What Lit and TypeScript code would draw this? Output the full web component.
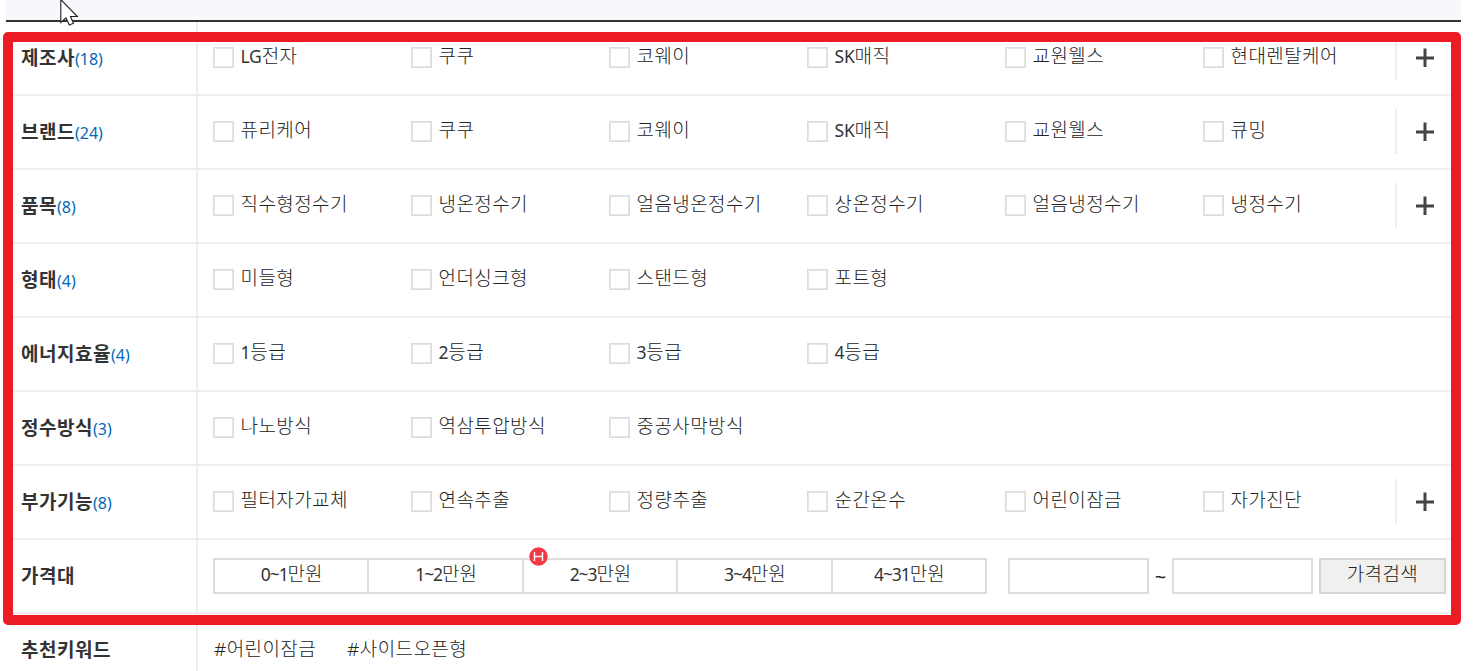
import { LitElement, html, css, nothing } from 'lit';
import { customElement, property } from 'lit/decorators.js';

interface FilterGroup {
    title: string;
    count: number;
    options: string[];
    more?: boolean;
}

const GROUPS: FilterGroup[] = [
    { title: '제조사', count: 18, options: ['LG전자', '쿠쿠', '코웨이', 'SK매직', '교원웰스', '현대렌탈케어'], more: true },
    { title: '브랜드', count: 24, options: ['퓨리케어', '쿠쿠', '코웨이', 'SK매직', '교원웰스', '큐밍'], more: true },
    { title: '품목', count: 8, options: ['직수형정수기', '냉온정수기', '얼음냉온정수기', '상온정수기', '얼음냉정수기', '냉정수기'], more: true },
    { title: '형태', count: 4, options: ['미들형', '언더싱크형', '스탠드형', '포트형'] },
    { title: '에너지효율', count: 4, options: ['1등급', '2등급', '3등급', '4등급'] },
    { title: '정수방식', count: 3, options: ['나노방식', '역삼투압방식', '중공사막방식'] },
    { title: '부가기능', count: 8, options: ['필터자가교체', '연속추출', '정량추출', '순간온수', '어린이잠금', '자가진단'], more: true },
];

const PRICES = ['0~1만원', '1~2만원', '2~3만원', '3~4만원', '4~31만원'];
const HOT_PRICE = 2;
const KEYWORDS = ['#어린이잠금', '#사이드오픈형'];

// Splits a label so that latin characters can use tighter spacing than hangul
const mixed = (text: string) =>
    text.split(/([\x21-\x7e]+)/).filter(Boolean).map(part =>
        /^[\x21-\x7e]/.test(part) ? html`<span class="latin">${part}</span>` : part);

@customElement('filter-row')
export class FilterRow extends LitElement {
    static override styles = css`
    :host {
      display: flex;
      box-sizing: border-box;
      height: 74px;
      border-bottom: 2px solid #eee;
    }
    .title {
      display: flex;
      align-items: center;
      box-sizing: border-box;
      width: 192px;
      flex: none;
      padding: 0 0 3px 15px;
      border-right: 2px solid #eee;
      color: #333;
      font-size: 19px;
      font-weight: 700;
      letter-spacing: 0.5px;
      white-space: nowrap;
    }
    .count {
      margin-top: 5px;
      color: #0068b7;
      font-size: 16px;
      font-weight: 400;
      letter-spacing: 0;
    }
    .content {
      flex: 1;
      display: flex;
      align-items: center;
      padding-left: 15px;
    }
  `;

    @property({ type: String })
    label: string = '';

    @property({ type: Number })
    count: number = 0;

    override render() {
        return html`
      <div class="title">
        <span>${this.label}</span>
        ${this.count ? html`<span class="count">(${this.count})</span>` : nothing}
      </div>
      <div class="content"><slot></slot></div>
    `;
    }
}

@customElement('app-root')
export class AppRoot extends LitElement {
    static override styles = css`
    :host {
      display: block;
      position: relative;
      box-sizing: border-box;
      height: 671px;
      overflow: hidden;
      padding: 0 17px 0 6px;
      background: #fff;
      color: #222;
      font-family: 'Noto Sans', 'Noto Sans CJK KR', sans-serif;
      font-size: 19px;
    }
    .topbar {
      height: 20px;
      background: #f6f8fc;
      border-bottom: 2px solid #333;
    }
    .options {
      display: grid;
      grid-template-columns: repeat(6, 198px);
      flex: none;
      width: 1182px;
      margin-bottom: 2px;
    }
    .option {
      display: flex;
      align-items: center;
      gap: 6.5px;
      height: 30px;
      font-weight: 300;
      line-height: 28px;
      letter-spacing: 0.4px;
      white-space: nowrap;
    }
    .option .text {
      margin-top: -3px;
    }
    .latin {
      color: #333;
      font-size: 17.5px;
      font-weight: 400;
      letter-spacing: -0.2px;
    }
    .box {
      box-sizing: border-box;
      width: 21px;
      height: 21px;
      border: 1px solid #dcdcdc;
      background: #fff;
      box-shadow: inset 0 0 0 1px #e6e6e6;
    }
    .more {
      display: flex;
      align-items: center;
      width: 56px;
      height: 45px;
      margin-bottom: 2px;
      padding-left: 19px;
      box-sizing: border-box;
      border-left: 2px solid #eee;
    }
    .prices {
      display: flex;
      box-sizing: border-box;
      width: 774px;
      height: 36px;
      border: 2px solid #ddd;
    }
    .price {
      position: relative;
      flex: 1;
      display: flex;
      align-items: center;
      justify-content: center;
      padding: 0 0 3px 1px;
      font-weight: 300;
      line-height: 27px;
    }
    .price + .price {
      border-left: 2px solid #ddd;
    }
    .price .latin {
      letter-spacing: -1.1px;
    }
    .hot {
      position: absolute;
      left: 5px;
      top: -13px;
    }
    .field {
      box-sizing: border-box;
      width: 141px;
      height: 36px;
      border: 2px solid #ddd;
      padding: 0 8px;
      border-radius: 0;
      font: inherit;
      outline: none;
    }
    .from {
      margin-left: 21px;
    }
    .tilde {
      width: 23px;
      font-size: 20px;
      text-align: center;
    }
    .search {
      box-sizing: border-box;
      width: 127px;
      height: 36px;
      margin-left: 6px;
      padding: 0 0 3px;
      border: 2px solid #d5d5d5;
      background: #f0f0ee;
      color: inherit;
      font: inherit;
      font-weight: 300;
      line-height: 27px;
      letter-spacing: 0.4px;
    }
    .keywords {
      display: flex;
      gap: 31px;
      padding: 0 0 4px 1px;
      font-weight: 300;
      letter-spacing: 0.4px;
    }
    .highlight {
      position: absolute;
      left: 3px;
      top: 32px;
      box-sizing: border-box;
      width: 1458px;
      height: 593px;
      border: 10px solid #ed1c24;
      border-radius: 5px;
      pointer-events: none;
    }
    .cursor {
      position: absolute;
      left: 60px;
      top: 0;
    }
  `;

    private _renderMore() {
        return html`
      <div class="more">
        <svg width="18" height="19" viewBox="0 0 18 19">
          <path d="M0 10H18M9 0.5V19" stroke="#444" stroke-width="3" />
        </svg>
      </div>
    `;
    }

    private _renderGroup(group: FilterGroup) {
        return html`
      <filter-row label=${group.title} count=${group.count}>
        <div class="options">
          ${group.options.map(option => html`
            <label class="option">
              <span class="box"></span>
              <span class="text">${mixed(option)}</span>
            </label>
          `)}
        </div>
        ${group.more ? this._renderMore() : nothing}
      </filter-row>
    `;
    }

    private _renderHot() {
        return html`
      <svg class="hot" width="19" height="19" viewBox="0 0 19 19">
        <circle cx="9.5" cy="9.5" r="9.2" fill="#f13a45" />
        <path d="M5.5 5V14M13.5 5V14M5.5 9.5H13.5" fill="none" stroke="#fff" stroke-width="1.4" />
      </svg>
    `;
    }

    override render() {
        return html`
      <div class="topbar"></div>
      ${GROUPS.map(group => this._renderGroup(group))}
      <filter-row label="가격대">
        <div class="prices">
          ${PRICES.map((price, i) => html`
            <div class="price">
              <span>${mixed(price)}</span>
              ${i === HOT_PRICE ? this._renderHot() : nothing}
            </div>
          `)}
        </div>
        <input class="field from" type="text" aria-label="최저가">
        <span class="tilde">~</span>
        <input class="field" type="text" aria-label="최고가">
        <button class="search">가격검색</button>
      </filter-row>
      <filter-row label="추천키워드">
        <div class="keywords">
          ${KEYWORDS.map(keyword => html`<span>${keyword}</span>`)}
        </div>
      </filter-row>
      <div class="highlight"></div>
      <svg class="cursor" width="20" height="27" viewBox="0 0 20 27">
        <path d="M.8 -.5V22.5L6 18L9.3 25L13.5 23.2L10.5 16.5H17.3Z" fill="#fff" stroke="#222" stroke-width="1.1" />
      </svg>
    `;
    }
}
